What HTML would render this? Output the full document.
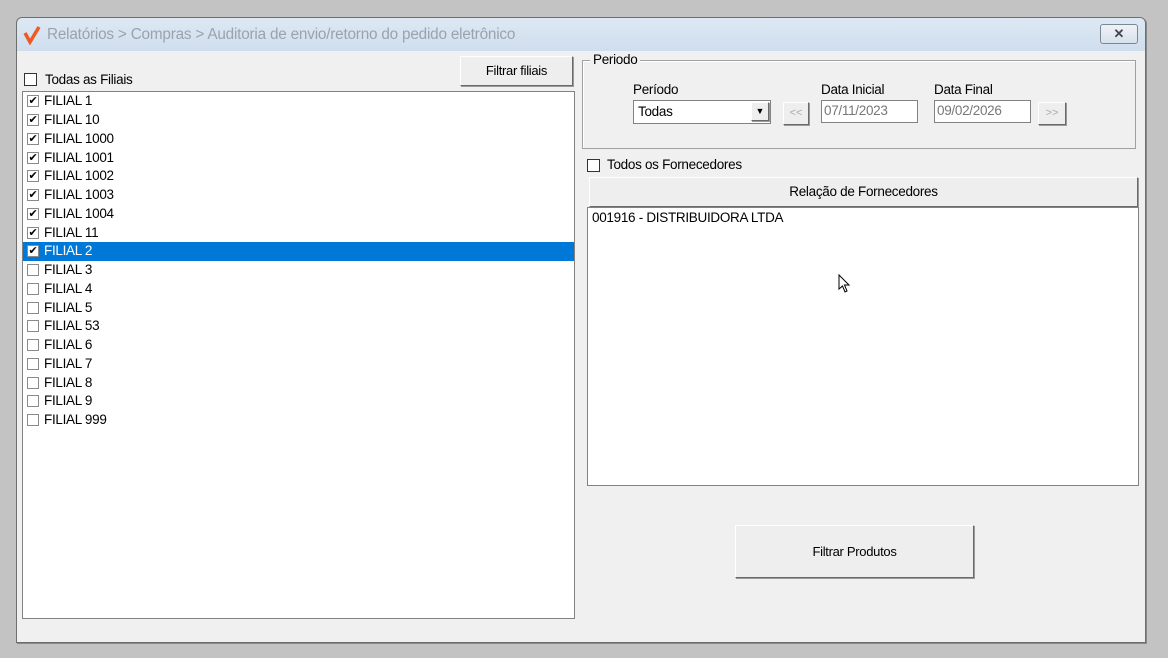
<!DOCTYPE html>
<html><head><meta charset="utf-8"><style>
*{box-sizing:border-box;margin:0;padding:0}
body{width:1168px;height:658px;background:#c3c3c3;font-family:"Liberation Sans",sans-serif;font-size:13px;color:#000;position:relative;overflow:hidden}
.a{position:absolute}
.win{left:16px;top:17px;width:1130px;height:626px;background:#f0f0f0;border:1px solid #6e6e6e;border-radius:6px 6px 0 0;box-shadow:1px 1px 0 #888}
.title{left:0;top:0;width:1128px;height:33px;background:linear-gradient(#dde8f3,#cfdeee);border-radius:6px 6px 0 0}
.btn{background:#eeeeee;border:1px solid;border-color:#fff #6a6a6a #6a6a6a #fff;box-shadow:1px 1px 0 #9a9a9a;text-align:center}
.cb{width:13px;height:13px;border:1px solid #333;background:#fff}
.scb{width:12px;height:12px;border:1px solid #8a8a8a;background:#fff;font-size:11px;line-height:10px;text-align:center}
.row{height:18.75px;line-height:18px;padding-left:4px;display:flex;align-items:center;gap:5px;font-size:13.5px;letter-spacing:-.3px}
.box{background:#fff;border:1px solid #828282}
</style></head><body>
<div class="a win">
 <div class="a title"></div>
</div>
<svg class="a" style="left:23px;top:25px" width="18" height="20"><path d="M2 8 L7 17 L16 2" stroke="#ee5a24" stroke-width="3.5" fill="none"/></svg>
<div class="a" style="left:47px;top:26px;font-size:15.3px;color:#9aa3ab;letter-spacing:-.2px">Relatórios &gt; Compras &gt; Auditoria de envio/retorno do pedido eletrônico</div>
<div class="a" style="left:1100px;top:24px;width:38px;height:20px;border:1px solid #7a8794;border-radius:3px;background:linear-gradient(#eef2f7,#d8e1ea);text-align:center;font-size:13px;line-height:18px;color:#445;font-weight:bold">✕</div>

<div class="a cb" style="left:24px;top:73px"></div>
<div class="a" style="left:45px;top:72px;font-size:13.5px;letter-spacing:-.3px">Todas as Filiais</div>
<div class="a btn" style="left:460px;top:56px;width:113px;height:30px;line-height:28px;font-size:13px;letter-spacing:-.3px">Filtrar filiais</div>

<div class="a box" style="left:22px;top:91px;width:553px;height:528px">
 <div class="row"><span class="scb">✔</span>FILIAL 1</div>
 <div class="row"><span class="scb">✔</span>FILIAL 10</div>
 <div class="row"><span class="scb">✔</span>FILIAL 1000</div>
 <div class="row"><span class="scb">✔</span>FILIAL 1001</div>
 <div class="row"><span class="scb">✔</span>FILIAL 1002</div>
 <div class="row"><span class="scb">✔</span>FILIAL 1003</div>
 <div class="row"><span class="scb">✔</span>FILIAL 1004</div>
 <div class="row"><span class="scb">✔</span>FILIAL 11</div>
 <div class="row" style="background:#0078d7;color:#fff"><span class="scb" style="color:#000">✔</span>FILIAL 2</div>
 <div class="row"><span class="scb"></span>FILIAL 3</div>
 <div class="row"><span class="scb"></span>FILIAL 4</div>
 <div class="row"><span class="scb"></span>FILIAL 5</div>
 <div class="row"><span class="scb"></span>FILIAL 53</div>
 <div class="row"><span class="scb"></span>FILIAL 6</div>
 <div class="row"><span class="scb"></span>FILIAL 7</div>
 <div class="row"><span class="scb"></span>FILIAL 8</div>
 <div class="row"><span class="scb"></span>FILIAL 9</div>
 <div class="row"><span class="scb"></span>FILIAL 999</div>
</div>

<div class="a" style="left:582px;top:60px;width:554px;height:89px;border:1px solid #a0a0a0;box-shadow:inset 1px 1px 0 #fff"></div>
<div class="a" style="left:590px;top:52px;background:#f0f0f0;padding:0 3px;font-size:13.5px;letter-spacing:-.3px">Periodo</div>
<div class="a" style="left:633px;top:82px;font-size:13.5px;letter-spacing:-.3px">Período</div>
<div class="a" style="left:821px;top:82px;font-size:13.5px;letter-spacing:-.3px">Data Inicial</div>
<div class="a" style="left:934px;top:82px;font-size:13.5px;letter-spacing:-.3px">Data Final</div>
<div class="a box" style="left:633px;top:100px;width:138px;height:24px;padding:3px 4px;font-size:13.5px;letter-spacing:-.3px">Todas</div>
<div class="a btn" style="left:751px;top:102px;width:18px;height:19px;font-size:9px;line-height:17px">▼</div>
<div class="a btn" style="left:783px;top:102px;width:26px;height:23px;color:#aaa;line-height:21px;font-size:11px">&lt;&lt;</div>
<div class="a box" style="left:821px;top:100px;width:97px;height:23px;padding:2px 2px;color:#777;font-size:13.5px;letter-spacing:-.3px">07/11/2023</div>
<div class="a box" style="left:934px;top:100px;width:97px;height:23px;padding:2px 2px;color:#777;font-size:13.5px;letter-spacing:-.3px">09/02/2026</div>
<div class="a btn" style="left:1038px;top:102px;width:28px;height:23px;color:#aaa;line-height:21px;font-size:11px">&gt;&gt;</div>

<div class="a cb" style="left:587px;top:159px"></div>
<div class="a" style="left:607px;top:157px;font-size:13.5px;letter-spacing:-.3px">Todos os Fornecedores</div>
<div class="a btn" style="left:589px;top:177px;width:549px;height:30px;line-height:27px;font-size:13.5px;letter-spacing:-.3px">Relação de Fornecedores</div>
<div class="a box" style="left:587px;top:207px;width:552px;height:279px;padding:2px 4px;font-size:13.5px;letter-spacing:-.3px">001916 - DISTRIBUIDORA LTDA</div>
<svg class="a" style="left:838px;top:274px" width="14" height="20"><path d="M1 1 L1 15 L4.5 12 L7 18 L9 17 L6.5 11 L11 11 Z" fill="#fff" stroke="#000" stroke-width="1"/></svg>
<div class="a btn" style="left:735px;top:525px;width:239px;height:53px;line-height:51px;font-size:13px;letter-spacing:-.3px">Filtrar Produtos</div>
</body></html>
